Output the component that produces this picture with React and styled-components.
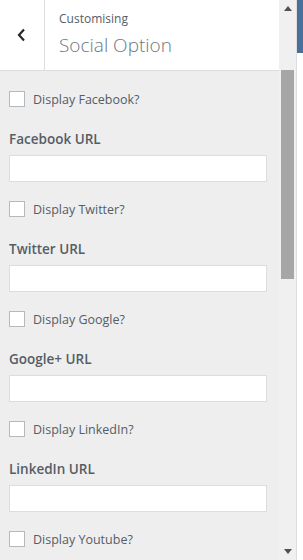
import styled, { createGlobalStyle } from "styled-components";

const Global = createGlobalStyle`
    html, body {
        margin: 0;
        padding: 0;
        overflow: hidden;
        background: #fff;
    }
`

const Page = styled.div`
    display: flex;
    width: 303px;
    height: 560px;
    overflow: hidden;
    font-family: "Open Sans", "Noto Sans", sans-serif;
`

const Panel = styled.div`
    width: 279px;
    display: flex;
    flex-direction: column;
    background-color: #eee;
    overflow: hidden;
`

const Header = styled.div`
    display: flex;
    height: 70px;
    background: #fff;
    border-bottom: 1px solid #ddd;
    flex-shrink: 0;
`

const Back = styled.div`
    width: 44px;
    border-right: 1px solid #ddd;
    display: flex;
    align-items: center;
    justify-content: center;
`

const Titles = styled.div`
    padding: 10px 14px;
    display: flex;
    flex-direction: column;
    span {
        font-size: 12px;
        color: #555d66;
        line-height: 18px;
    }
    h3 {
        margin: 4px 0 0;
        font-size: 19px;
        font-weight: 300;
        color: #6c7781;
        line-height: 26px;
    }
`

const Content = styled.div`
    padding: 20px 12px 0 9px;
`

const Group = styled.div`
    margin-bottom: 19px;
`

const CheckRow = styled.label`
    display: flex;
    align-items: center;
    gap: 8px;
    font-size: 12.5px;
    color: #555d66;
    height: 16px;
`

const Box = styled.span`
    width: 14px;
    height: 14px;
    background: #fff;
    border: 1px solid #b4b9be;
`

const FieldLabel = styled.div`
    margin-top: 22px;
    font-size: 13.5px;
    font-weight: 600;
    color: #555d66;
    line-height: 20px;
`

const Input = styled.div`
    margin-top: 6px;
    height: 25px;
    background: #fff;
    border: 1px solid #ddd;
`

const Scrollbar = styled.div`
    width: 17px;
    background: #f0f0f0;
    display: flex;
    flex-direction: column;
    align-items: center;
`

const Arrow = styled.div`
    height: 17px;
    width: 17px;
    display: flex;
    align-items: center;
    justify-content: center;
    flex-shrink: 0;
`

const Track = styled.div`
    flex: 1;
    width: 100%;
    display: flex;
    justify-content: center;
`

const Thumb = styled.div`
    margin-top: 53px;
    width: 13px;
    height: 209px;
    background: #a6a6a6;
`

const Edge = styled.div`
    width: 1px;
    background: #ddd;
`

const Strip = styled.div`
    flex: 1;
    background: #fff;
    div {
        height: 53px;
        background: #4a6f9a;
    }
`

const fields = [
    { check: "Display Facebook?", label: "Facebook URL" },
    { check: "Display Twitter?", label: "Twitter URL" },
    { check: "Display Google?", label: "Google+ URL" },
    { check: "Display LinkedIn?", label: "LinkedIn URL" },
    { check: "Display Youtube?" },
]

export default function App() {
    return (
        <>
            <Global />
            <Page>
                <Panel>
                    <Header>
                        <Back>
                            <svg width="10" height="14" viewBox="0 0 10 14">
                                <polyline points="7,1.5 2,7 7,12.5" fill="none" stroke="#23282d" strokeWidth="2.2" />
                            </svg>
                        </Back>
                        <Titles>
                            <span>Customising</span>
                            <h3>Social Option</h3>
                        </Titles>
                    </Header>
                    <Content>
                        {fields.map((f) => (
                            <Group key={f.check}>
                                <CheckRow>
                                    <Box />
                                    {f.check}
                                </CheckRow>
                                {f.label && (
                                    <>
                                        <FieldLabel>{f.label}</FieldLabel>
                                        <Input />
                                    </>
                                )}
                            </Group>
                        ))}
                    </Content>
                </Panel>
                <Scrollbar>
                    <Arrow>
                        <svg width="8" height="5" viewBox="0 0 8 5"><polygon points="0,5 8,5 4,0" fill="#505050" /></svg>
                    </Arrow>
                    <Track><Thumb /></Track>
                    <Arrow>
                        <svg width="8" height="5" viewBox="0 0 8 5"><polygon points="0,0 8,0 4,5" fill="#505050" /></svg>
                    </Arrow>
                </Scrollbar>
                <Edge />
                <Strip><div /></Strip>
            </Page>
        </>
    )
}
